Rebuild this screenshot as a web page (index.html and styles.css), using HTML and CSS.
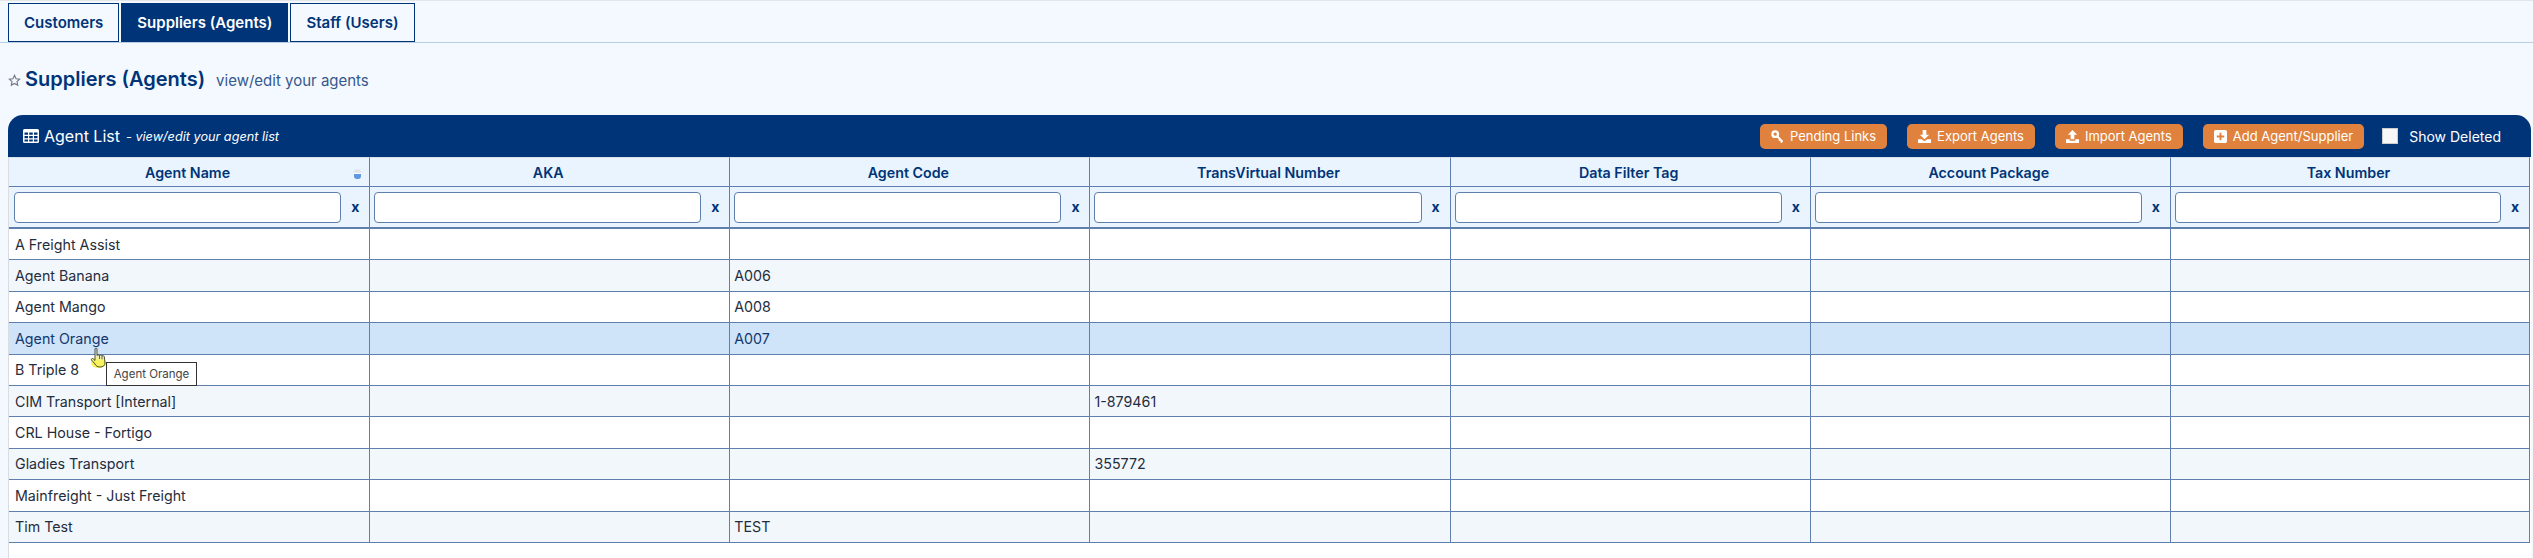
FILE: index.html
```html
<!DOCTYPE html>
<html lang="en">
<head>
<meta charset="utf-8">
<title>Suppliers (Agents)</title>
<link rel="stylesheet" href="styles.css">
</head>
<body>
<nav class="tabs">
  <a class="tab">Customers</a>
  <a class="tab active">Suppliers (Agents)</a>
  <a class="tab">Staff (Users)</a>
</nav>
<header class="page-title">
  <svg class="star" viewBox="0 0 24 24" width="13" height="13"><path d="M12 2.500l2.900 6.200 6.600.8-4.900 4.600 1.300 6.700-5.900-3.300-5.900 3.300 1.300-6.700-4.900-4.600 6.600-.8z" fill="none" stroke="#6f7680" stroke-width="2"/></svg>
  <h1>Suppliers (Agents)</h1>
  <span class="subtitle">view/edit your agents</span>
</header>
<section class="panel">
  <div class="panel-head">
    <div class="panel-title">
      <svg class="grid-icon" viewBox="0 0 16 14" width="16" height="14"><path fill="#fff" fill-rule="evenodd" d="M1.500 0h13A1.500 1.500 0 0 1 16 1.500v11a1.500 1.500 0 0 1-1.500 1.500h-13A1.500 1.500 0 0 1 0 12.500v-11A1.500 1.500 0 0 1 1.500 0zM1.500 3.500v2.300h3.500V3.500zM6.200 3.500v2.300h3.600V3.500zM11 3.500v2.300h3.500V3.500zM1.500 7v2.200h3.500V7zM6.200 7v2.200h3.600V7zM11 7v2.200h3.500V7zM1.500 10.400v2.100h3.500v-2.100zM6.200 10.400v2.100h3.600v-2.100zM11 10.400v2.100h3.500v-2.100z"/></svg>
      <span class="panel-name">Agent List</span>
      <em class="panel-note">- view/edit your agent list</em>
    </div>
    <div class="panel-actions">
      <button class="btn"><svg viewBox="0 0 14 14" width="13" height="13"><circle cx="4.500" cy="4.500" r="3" fill="none" stroke="#fff" stroke-width="2.400"/><path d="M6.500 6.500l6 6M10 10l-1.500 1.500M12 12l-1.500 1.500" stroke="#fff" stroke-width="2" fill="none"/></svg>Pending Links</button>
      <button class="btn"><svg viewBox="0 0 14 14" width="13" height="13"><path fill="#fff" d="M5 0h4v5h3L7 10 2 5h3zM0 10h4l3 2 3-2h4v4H0z"/></svg>Export Agents</button>
      <button class="btn"><svg viewBox="0 0 14 14" width="13" height="13"><path fill="#fff" d="M7 0l5 5H9v5H5V5H2zM0 10h4v1.500h6V10h4v4H0z"/></svg>Import Agents</button>
      <button class="btn"><svg viewBox="0 0 14 14" width="13" height="13"><path fill="#fff" fill-rule="evenodd" d="M2 0h10a2 2 0 0 1 2 2v10a2 2 0 0 1-2 2H2a2 2 0 0 1-2-2V2a2 2 0 0 1 2-2zM6 3v3H3v2h3v3h2V8h3V6H8V3z"/></svg>Add Agent/Supplier</button>
      <label class="deleted"><input type="checkbox" class="check"><span>Show Deleted</span></label>
    </div>
  </div>
  <table class="grid">
    <thead>
      <tr class="head-row">
        <th class="sorted">Agent Name<span class="sort"></span></th>
        <th>AKA</th><th>Agent Code</th><th>TransVirtual Number</th><th>Data Filter Tag</th><th>Account Package</th><th>Tax Number</th>
      </tr>
      <tr class="filter-row">
        <th><div class="filter"><input type="text"><b>x</b></div></th>
        <th><div class="filter"><input type="text"><b>x</b></div></th>
        <th><div class="filter"><input type="text"><b>x</b></div></th>
        <th><div class="filter"><input type="text"><b>x</b></div></th>
        <th><div class="filter"><input type="text"><b>x</b></div></th>
        <th><div class="filter"><input type="text"><b>x</b></div></th>
        <th><div class="filter"><input type="text"><b>x</b></div></th>
      </tr>
    </thead>
    <tbody>
      <tr><td>A Freight Assist</td><td></td><td></td><td></td><td></td><td></td><td></td></tr>
      <tr><td>Agent Banana</td><td></td><td>A006</td><td></td><td></td><td></td><td></td></tr>
      <tr><td>Agent Mango</td><td></td><td>A008</td><td></td><td></td><td></td><td></td></tr>
      <tr class="hover"><td>Agent Orange</td><td></td><td>A007</td><td></td><td></td><td></td><td></td></tr>
      <tr><td>B Triple 8</td><td></td><td></td><td></td><td></td><td></td><td></td></tr>
      <tr><td>CIM Transport [Internal]</td><td></td><td></td><td>1-879461</td><td></td><td></td><td></td></tr>
      <tr><td>CRL House - Fortigo</td><td></td><td></td><td></td><td></td><td></td><td></td></tr>
      <tr><td>Gladies Transport</td><td></td><td></td><td>355772</td><td></td><td></td><td></td></tr>
      <tr><td>Mainfreight - Just Freight</td><td></td><td></td><td></td><td></td><td></td><td></td></tr>
      <tr><td>Tim Test</td><td></td><td>TEST</td><td></td><td></td><td></td><td></td></tr>
    </tbody>
  </table>
</section>
<svg class="cursor" viewBox="0 0 18 22" width="18" height="22">
  <defs><linearGradient id="hand" x1="0" y1="0" x2="0" y2="1"><stop offset="0" stop-color="#dfe6ee"/><stop offset=".45" stop-color="#eef0c0"/><stop offset=".7" stop-color="#f8f35c"/></linearGradient></defs>
  <ellipse cx="8.500" cy="15.500" rx="7.500" ry="5.500" fill="#f8f35c"/>
  <path d="M5 2c0-1.200 2-1.200 2 0v6.500c1-.8 2-.8 2.500 0 1-.6 2-.5 2.500.3 1-.4 2-.1 2.300.8L15 16c0 2.500-2 4-5 4-2.500 0-4-1-5-3L1.500 13c-.6-1 .7-2 1.700-1.200L5 13.500z" fill="url(#hand)" stroke="#3b4030" stroke-width=".9"/>
  <path d="M9.500 8.500v3.500M12 8.800v3.500" stroke="#3b4030" stroke-width=".8" fill="none"/>
</svg>
<div class="tooltip">Agent Orange</div>
</body>
</html>
```
FILE: styles.css
```css
* { box-sizing: border-box; }
html, body { margin: 0; padding: 0; }
body {
  position: relative;
  height: 558px;
  overflow: hidden;
  background: #f4f9ff;
  font-family: Inter, "Liberation Sans", sans-serif;
  font-size: 14px;
  color: #1f2d3d;
  border-top: 1px solid #e3e5e8;
}
.tabs {
  display: flex;
  gap: 2px;
  margin-top: 2px;
  padding-left: 8px;
  height: 40px;
  border-bottom: 1px solid #b9cde4;
}
.tab {
  display: flex;
  align-items: center;
  justify-content: center;
  height: 39px;
  padding: 0 15px;
  border: 1px solid #003478;
  background: #f4f9ff;
  color: #003478;
  font-size: 15px;
  font-weight: 600;
}
.tab.active { background: #003478; color: #fff; }
.page-title {
  display: flex;
  align-items: center;
  height: 72px;
  padding: 0 0 0 8px;
}
.star { margin-top: 3px; }
h1 {
  margin: 0 0 0 4px;
  font-size: 20px;
  font-weight: 600;
  color: #003478;
}
.subtitle { margin-left: 11px; margin-top: 2px; font-size: 15px; color: #34588c; }
.panel {
  margin: 0 2px 0 8px;
  height: 443px;
  background: #fff;
  border-left: 1px solid #d9dde2;
  border-radius: 15px 15px 0 0;
}
.panel-head {
  display: flex;
  align-items: center;
  justify-content: space-between;
  height: 42px;
  margin-left: -1px;
  padding: 0 30px 0 15px;
  background: #003478;
  border-radius: 15px 15px 0 0;
  color: #fff;
}
.panel-title { display: flex; align-items: center; }
.grid-icon { margin-right: 5px; }
.panel-name { font-size: 16px; }
.panel-note { margin-left: 6px; font-size: 12.700px; }
.panel-actions { display: flex; align-items: center; }
.btn {
  display: flex;
  align-items: center;
  gap: 6px;
  height: 25px;
  margin-right: 20px;
  padding: 0 11px;
  border: none;
  border-radius: 5px;
  background: #e0823d;
  color: #fff;
  font: 13px Inter, "Liberation Sans", sans-serif;
  white-space: nowrap;
}
.btn:nth-child(4) { margin-right: 0; }
.deleted { display: flex; align-items: center; margin-left: 18px; font-size: 14px; }
.check {
  appearance: none;
  width: 16px;
  height: 16px;
  margin: 0 11px 0 0;
  background: #f7f7f7;
  border: 1px solid #ccc;
}
.grid {
  width: 2521px;
  table-layout: fixed;
  border-collapse: separate;
  border-spacing: 0;
}
.grid th, .grid td {
  padding: 0;
  border-bottom: 1px solid #5f80ad;
}
.grid th + th, .grid td + td { border-left: 1px solid #5f80ad; }
.grid th:last-child, .grid td:last-child { border-right: 1px solid #5f80ad; }
.grid thead th { background: #e9f4ff; color: #003478; }
.head-row th {
  position: relative;
  height: 30px;
  padding-right: 3px;
  font-size: 14.250px;
  font-weight: 600;
  border-top: 1px solid #d9e3ef;
}
.sort {
  position: absolute;
  right: 8px;
  top: 11px;
  width: 7px;
  height: 10px;
  background: linear-gradient(#e2e6eb 0 4px, #fff 4px 5px, #5e97e0 5px);
  border-radius: 3px;
}
.filter-row th { height: 42px; border-bottom-width: 2px; }
.filter { display: flex; align-items: center; padding: 0 10px 0 4px; }
.filter-row th:first-child .filter { padding-left: 5px; }
.filter input {
  flex: 1;
  min-width: 0;
  height: 31px;
  border: 1px solid #5f80ad;
  border-radius: 4px;
  background: #fff;
}
.filter b { width: 8px; margin-left: 10px; font-size: 14px; font-weight: 700; line-height: 1; }
.grid td {
  height: 31.400px;
  padding-left: 4px;
  background: #fff;
  color: #1f2d3d;
  font-size: 14.250px;
  white-space: nowrap;
}
.grid td:first-child { padding-left: 6px; }
.grid tbody tr:nth-child(even) td { background: #f2f7fc; }
.grid tbody tr.hover td { background: #cfe3f9; color: #12386f; }
.cursor { position: absolute; left: 90px; top: 346px; }
.tooltip {
  position: absolute;
  left: 106px;
  top: 361px;
  width: 91px;
  height: 24px;
  border: 1px solid #333;
  background: #fff;
  font-size: 11.500px;
  line-height: 22px;
  text-align: center;
  color: #444;
}
```
